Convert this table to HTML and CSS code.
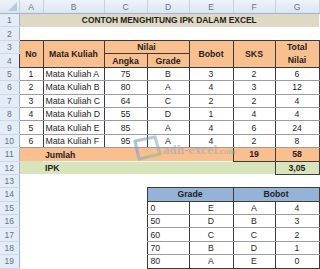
FILE: index.html
```html
<!DOCTYPE html>
<html>
<head>
<meta charset="utf-8">
<link rel="stylesheet" href="styles.css">
</head>
<body>
<div class="wrap">
<table class="sheet">
<colgroup>
<col class="w-hd"><col class="w-a"><col class="w-b"><col class="w-c"><col class="w-d"><col class="w-e"><col class="w-f"><col class="w-g"><col class="w-h">
</colgroup>
<tr class="colhead"><th class="corner"><span class="tri"></span></th><th>A</th><th>B</th><th>C</th><th>D</th><th>E</th><th>F</th><th>G</th><th></th></tr>
<tr><th class="rh">1</th><td colspan="7" class="title">CONTOH MENGHITUNG IPK DALAM EXCEL</td><td></td></tr>
<tr><th class="rh">2</th><td></td><td></td><td></td><td></td><td></td><td></td><td></td><td></td></tr>
<tr><th class="rh">3</th><td rowspan="2" class="hd">No</td><td rowspan="2" class="hd">Mata Kuliah</td><td colspan="2" class="hd">Nilai</td><td rowspan="2" class="hd">Bobot</td><td rowspan="2" class="hd">SKS</td><td rowspan="2" class="hd tot">Total<br>Nilai</td><td></td></tr>
<tr><th class="rh">4</th><td class="hd">Angka</td><td class="hd">Grade</td><td></td></tr>
<tr class="dr"><th class="rh">5</th><td class="c">1</td><td class="l">Mata Kuliah A</td><td class="c">75</td><td class="c">B</td><td class="c">3</td><td class="c">2</td><td class="c">6</td><td class="x"></td></tr>
<tr class="dr"><th class="rh">6</th><td class="c">2</td><td class="l">Mata Kuliah B</td><td class="c">80</td><td class="c">A</td><td class="c">4</td><td class="c">3</td><td class="c">12</td><td class="x"></td></tr>
<tr class="dr"><th class="rh">7</th><td class="c">3</td><td class="l">Mata Kuliah C</td><td class="c">64</td><td class="c">C</td><td class="c">2</td><td class="c">2</td><td class="c">4</td><td class="x"></td></tr>
<tr class="dr"><th class="rh">8</th><td class="c">4</td><td class="l">Mata Kuliah D</td><td class="c">55</td><td class="c">D</td><td class="c">1</td><td class="c">4</td><td class="c">4</td><td class="x"></td></tr>
<tr class="dr"><th class="rh">9</th><td class="c">5</td><td class="l">Mata Kuliah E</td><td class="c">85</td><td class="c">A</td><td class="c">4</td><td class="c">6</td><td class="c">24</td><td class="x"></td></tr>
<tr class="dr"><th class="rh">10</th><td class="c">6</td><td class="l">Mata Kuliah F</td><td class="c">95</td><td class="c">A</td><td class="c">4</td><td class="c">2</td><td class="c">8</td><td class="x"></td></tr>
<tr><th class="rh">11</th><td class="sum"></td><td colspan="4" class="sum b">Jumlah</td><td class="sum b c bx">19</td><td class="sum b c bx">58</td><td></td></tr>
<tr><th class="rh">12</th><td class="ipk"></td><td colspan="5" class="ipk b">IPK</td><td class="ipk b c bx">3,05</td><td></td></tr>
<tr><th class="rh">13</th><td></td><td></td><td></td><td></td><td></td><td></td><td></td><td></td></tr>
<tr><th class="rh">14</th><td></td><td></td><td></td><td colspan="2" class="gh">Grade</td><td colspan="2" class="gh">Bobot</td><td></td></tr>
<tr class="gr"><th class="rh">15</th><td></td><td></td><td></td><td class="g l">0</td><td class="g c">E</td><td class="g c">A</td><td class="g c">4</td><td></td></tr>
<tr class="gr"><th class="rh">16</th><td></td><td></td><td></td><td class="g l">50</td><td class="g c">D</td><td class="g c">B</td><td class="g c">3</td><td></td></tr>
<tr class="gr"><th class="rh">17</th><td></td><td></td><td></td><td class="g l">60</td><td class="g c">C</td><td class="g c">C</td><td class="g c">2</td><td></td></tr>
<tr class="gr"><th class="rh">18</th><td></td><td></td><td></td><td class="g l">70</td><td class="g c">B</td><td class="g c">D</td><td class="g c">1</td><td></td></tr>
<tr class="gr"><th class="rh">19</th><td></td><td></td><td></td><td class="g l last">80</td><td class="g c last">A</td><td class="g c last">E</td><td class="g c last">0</td><td></td></tr>
<tr><th class="rh"></th><td></td><td></td><td></td><td></td><td></td><td></td><td></td><td></td></tr>
</table>
<div class="mark">
<svg class="logo" width="34" height="26" viewBox="0 0 34 26">
<defs>
<linearGradient id="lg" x1="0" y1="0" x2="1" y2="1">
<stop offset="0" stop-color="#5b8fc9"/>
<stop offset="0.55" stop-color="#7fa7d3"/>
<stop offset="1" stop-color="#8cc46a"/>
</linearGradient>
</defs>
<path d="M6 6 L26 2 L31 19 L10 24 Z" fill="none" stroke="url(#lg)" stroke-width="3.2" stroke-linejoin="round"/>
</svg>
<span class="mtext">adh-excel<small>.com</small></span>
</div>
</div>
</body>
</html>
```
FILE: styles.css
```css
html, body {
  margin: 0;
  padding: 0;
  background: #ffffff;
  overflow: hidden;
}
body {
  font-family: "Liberation Sans", Arial, sans-serif;
  font-size: 8.7px;
  color: #1e1e1e;
}
.wrap {
  position: relative;
  width: 320px;
  height: 269px;
  overflow: hidden;
}
.sheet {
  border-collapse: collapse;
  table-layout: fixed;
  width: 359px;
}
.w-hd { width: 19px; }
.w-a { width: 24px; }
.w-b { width: 61px; }
.w-c { width: 43px; }
.w-d { width: 42px; }
.w-e { width: 44px; }
.w-f { width: 42px; }
.w-g { width: 44px; }
.w-h { width: 40px; }
.sheet tr { height: 13.4px; }
.sheet td, .sheet th {
  padding: 0 2px;
  white-space: nowrap;
  overflow: hidden;
  line-height: 12px;
  font-weight: normal;
}
.colhead { height: 13px; }
.sheet .colhead th {
  height: 13px;
  background: linear-gradient(#eef3fa, #dbe5f2);
  color: #62738b;
  border-right: 1px solid #c3d2e4;
  border-bottom: 1px solid #9eb6ce;
  text-align: center;
  font-size: 8.5px;
}
.corner { position: relative; }
.tri {
  position: absolute;
  right: 2px;
  bottom: 2px;
  width: 0;
  height: 0;
  border-left: 9px solid transparent;
  border-bottom: 9px solid #b9c9dd;
}
.sheet .rh {
  background: #e4ecf7;
  color: #62738b;
  border-right: 1px solid #9eb6ce;
  border-bottom: 1px solid #cbd8e9;
  text-align: center;
  font-size: 8.5px;
}
.sheet .title {
  background: #ddd9c4;
  text-align: center;
  font-weight: bold;
  font-size: 8.4px;
  color: #222;
}
.sheet .hd {
  background: #fabf8f;
  font-weight: bold;
  text-align: center;
  border: 1px solid #3a3a3a;
  color: #222;
}
.sheet .tot { line-height: 13px; }
.c { text-align: center; }
.l { text-align: left; }
.sheet .b { font-weight: bold; }
.dr td {
  border-top: 1px solid #9c9c9c;
  border-bottom: 1px solid #9c9c9c;
  border-left: 1px solid #3c3c3c;
  border-right: 1px solid #3c3c3c;
}
.dr td.x { border: none; }
.sum {
  background: #fabf8f;
  color: #222;
}
.ipk {
  background: #d8e4bc;
  color: #222;
}
.bx {
  border-left: 1px solid #3c3c3c;
  border-right: 1px solid #3c3c3c;
  border-top: 1px solid #3c3c3c;
  border-bottom: 1px solid #3c3c3c;
}
.sheet .gh {
  background: #95b3d7;
  font-weight: bold;
  text-align: center;
  border: 1px solid #3c3c3c;
  color: #222;
}
.g {
  border-top: 1px solid #9c9c9c;
  border-bottom: 1px solid #9c9c9c;
  border-left: 1px solid #3c3c3c;
  border-right: 1px solid #3c3c3c;
}
.sheet .g.l { padding-left: 3px; }
.g.last { border-bottom: 1px solid #3c3c3c; }
.mark {
  position: absolute;
  left: 129px;
  top: 135px;
  display: flex;
  align-items: center;
  opacity: 0.55;
  pointer-events: none;
}
.logo { display: block; }
.mtext {
  font-family: "DejaVu Serif", "Liberation Serif", serif;
  font-weight: bold;
  font-size: 10.5px;
  color: #9aa7b8;
  margin-top: 4px;
  letter-spacing: -0.2px;
}
.mtext small { font-size: 7px; }
```
